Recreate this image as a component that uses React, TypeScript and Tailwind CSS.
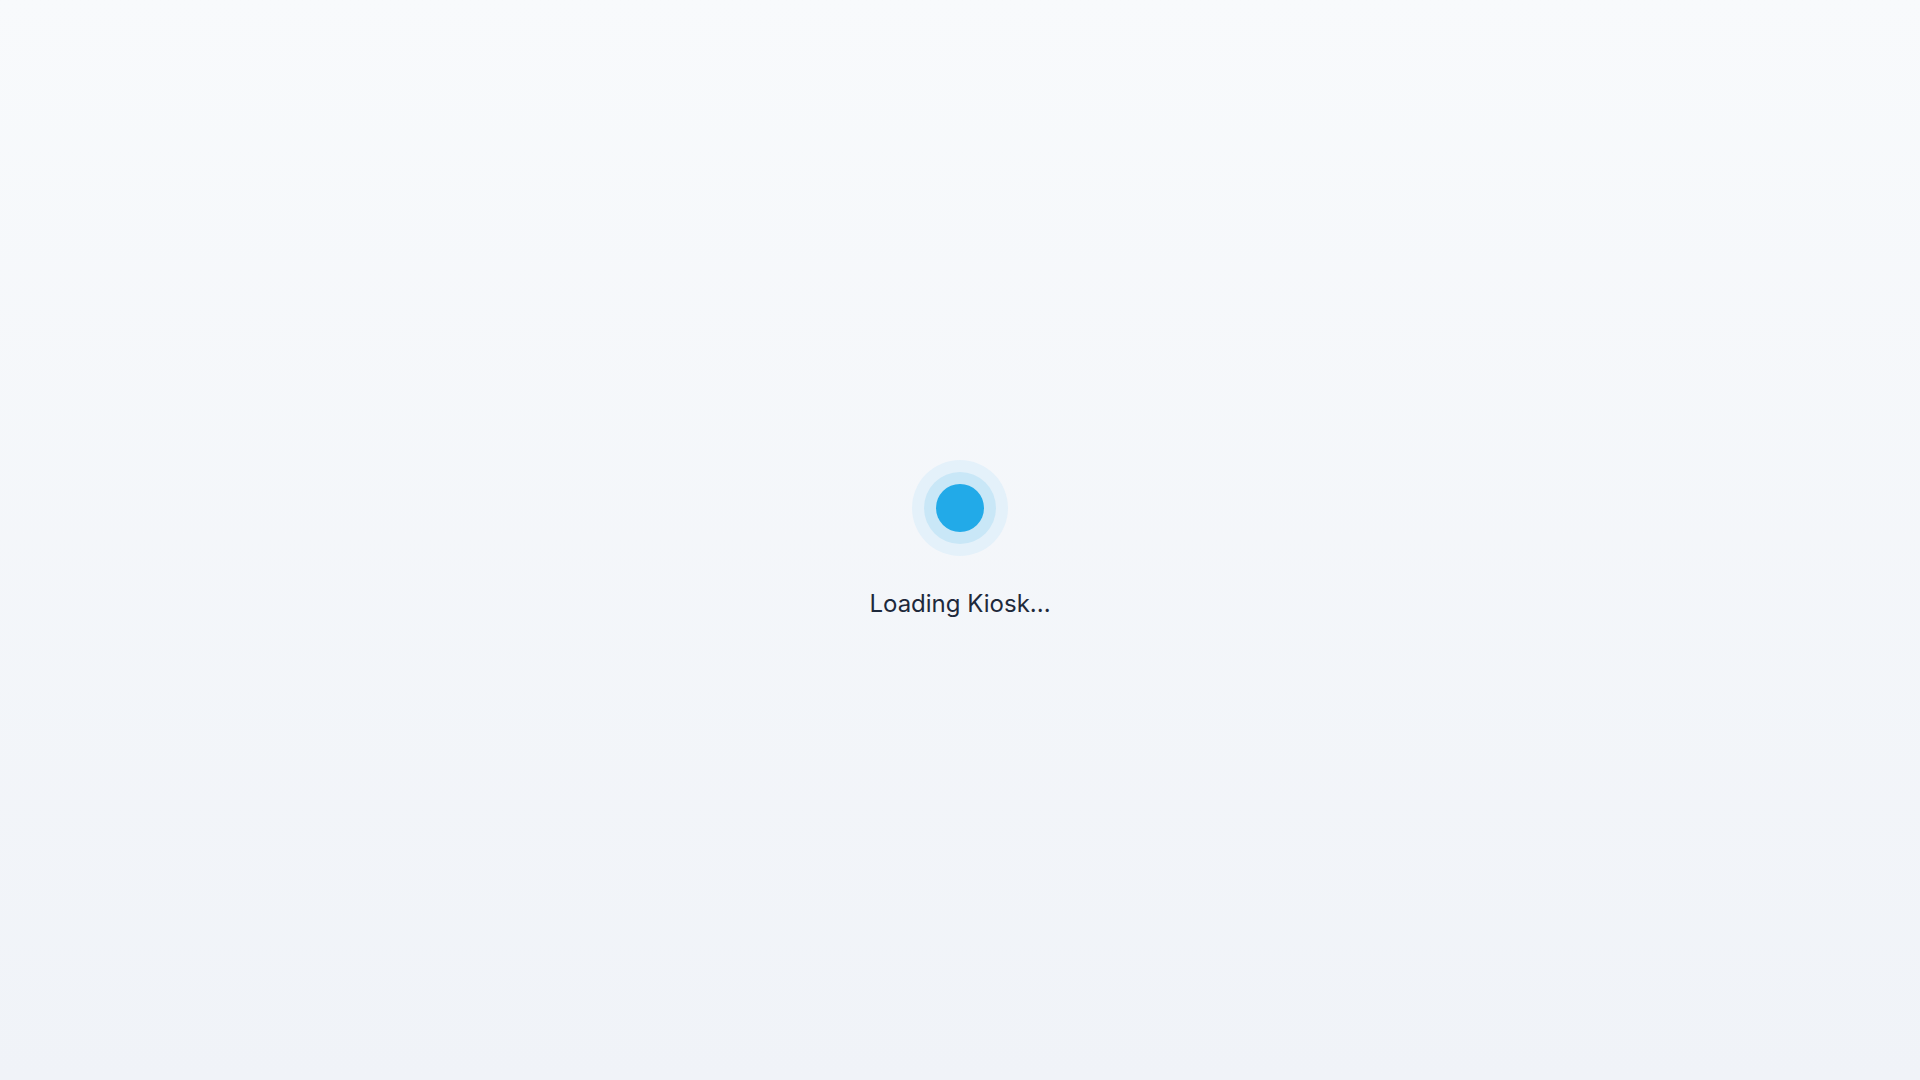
export default function App() {
  return (
    <div
      className="flex h-screen w-full flex-col items-center justify-center bg-gradient-to-b from-[#f8fafc] to-[#f0f3f8]"
      style={{ fontFamily: 'Inter, "Noto Sans", sans-serif' }}
    >
      <div className="flex h-24 w-24 items-center justify-center rounded-full bg-[#e4f1fa]">
        <div className="flex h-[72px] w-[72px] items-center justify-center rounded-full bg-[#c9e7f7]">
          <div className="h-12 w-12 rounded-full bg-[#22aae8]" />
        </div>
      </div>
      <p className="mt-8 text-2xl font-normal text-[#1e293b]">Loading Kiosk...</p>
    </div>
  );
}
